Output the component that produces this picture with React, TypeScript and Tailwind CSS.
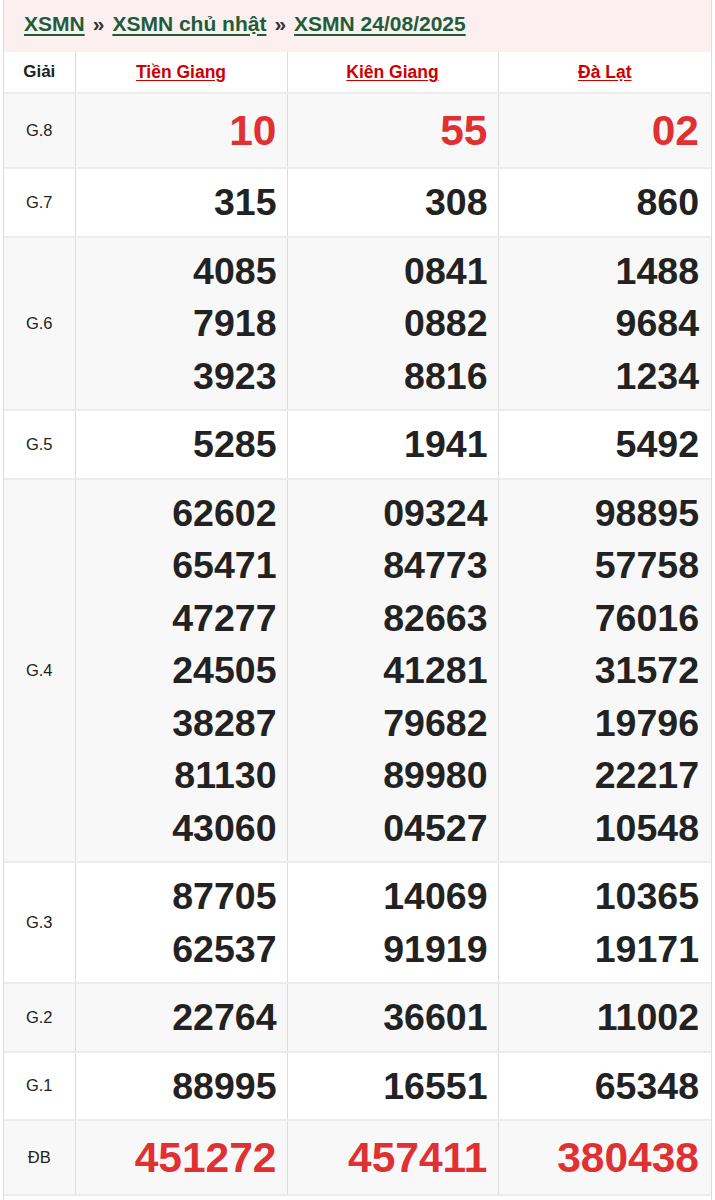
import React from "react";

type Row = { label: string; values: string[][]; red?: boolean; big?: boolean };

const rows: Row[] = [
  { label: "G.8", values: [["10"], ["55"], ["02"]], red: true, big: true },
  { label: "G.7", values: [["315"], ["308"], ["860"]] },
  {
    label: "G.6",
    values: [
      ["4085", "7918", "3923"],
      ["0841", "0882", "8816"],
      ["1488", "9684", "1234"],
    ],
  },
  { label: "G.5", values: [["5285"], ["1941"], ["5492"]] },
  {
    label: "G.4",
    values: [
      ["62602", "65471", "47277", "24505", "38287", "81130", "43060"],
      ["09324", "84773", "82663", "41281", "79682", "89980", "04527"],
      ["98895", "57758", "76016", "31572", "19796", "22217", "10548"],
    ],
  },
  {
    label: "G.3",
    values: [
      ["87705", "62537"],
      ["14069", "91919"],
      ["10365", "19171"],
    ],
  },
  { label: "G.2", values: [["22764"], ["36601"], ["11002"]] },
  { label: "G.1", values: [["88995"], ["16551"], ["65348"]] },
  { label: "ĐB", values: [["451272"], ["457411"], ["380438"]], red: true, big: true },
];

const provinces = ["Tiền Giang", "Kiên Giang", "Đà Lạt"];

export default function App() {
  return (
    <div
      className="w-[715px] min-h-[1200px] bg-white px-[3px]"
      style={{ fontFamily: '"Liberation Sans", Arial, Helvetica, sans-serif' }}
    >
      <div className="min-h-[1200px] border-x border-[#dddddd]">
        <div className="flex h-[52px] items-center gap-[8px] bg-[#fcefef] pl-[20px] pb-[4px] text-[21px] font-bold text-[#1e5d3a]">
          <a className="underline underline-offset-[3px]" href="#">XSMN</a>
          <span className="text-[#333]">»</span>
          <a className="underline underline-offset-[3px]" href="#">XSMN chủ nhật</a>
          <span className="text-[#333]">»</span>
          <a className="underline underline-offset-[3px]" href="#">XSMN 24/08/2025</a>
        </div>
        <table className="w-full table-fixed border-collapse">
          <colgroup>
            <col className="w-[71px]" />
            <col className="w-[212px]" />
            <col className="w-[211px]" />
            <col />
          </colgroup>
          <thead>
            <tr className="h-[41px] bg-white">
              <th className="border-b-2 border-r border-b-[#ececec] border-r-[#dddddd] text-[17px] font-bold text-[#222]">
                Giải
              </th>
              {provinces.map((p, i) => (
                <th
                  key={p}
                  className={`border-b-2 border-b-[#ececec] ${i < 2 ? "border-r border-r-[#dddddd]" : ""} text-[17.5px] font-bold`}
                >
                  <a href="#" className="text-[#cc0000] underline underline-offset-[2px]">
                    {p}
                  </a>
                </th>
              ))}
            </tr>
          </thead>
          <tbody>
            {rows.map((r, ri) => (
              <tr key={r.label} className={ri % 2 === 0 ? "bg-[#f8f8f8]" : "bg-white"}>
                <td className="border-b-2 border-r border-b-[#ececec] border-r-[#dddddd] text-center text-[16.5px] text-[#222]">
                  {r.label}
                </td>
                {r.values.map((vals, ci) => (
                  <td
                    key={ci}
                    className={`border-b-2 border-b-[#ececec] ${ci < 2 ? "border-r border-r-[#dddddd] pr-[10px]" : "pr-[12px]"} py-[7px] text-right font-bold ${
                      r.big
                        ? "text-[42.5px] leading-[59px] text-[#df3134]"
                        : "text-[37.5px] leading-[52.5px] text-[#222]"
                    }`}
                  >
                    {vals.map((v) => (
                      <div key={v}>{v}</div>
                    ))}
                  </td>
                ))}
              </tr>
            ))}
          </tbody>
        </table>
        <div className="h-px" />
      </div>
    </div>
  );
}
